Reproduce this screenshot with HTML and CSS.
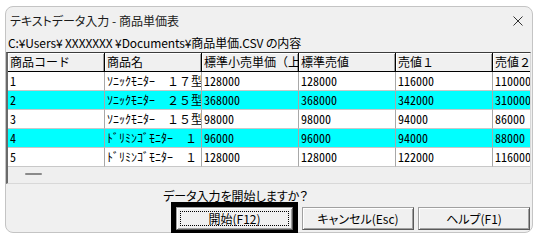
FILE: index.html
```html
<!DOCTYPE html>
<html lang="ja">
<head>
<meta charset="utf-8">
<title>テキストデータ入力 - 商品単価表</title>
<link rel="stylesheet" href="styles.css">
</head>
<body>
<div class="window">
  <div class="titlebar">
    <span class="title">テキストデータ入力 - 商品単価表</span>
    <svg class="close" width="10" height="10" viewBox="0 0 10 10"><path d="M0.5 0.5 L9.5 9.5 M9.5 0.5 L0.5 9.5" stroke="#333" stroke-width="1" fill="none"/></svg>
  </div>
  <div class="path">C:¥Users¥ XXXXXXX ¥Documents¥商品単価.CSV の内容</div>
  <div class="grid">
    <div class="row head">
      <div class="cell">商品コード</div>
      <div class="cell">商品名</div>
      <div class="cell"><span class="clip">標準小売単価（上</span></div>
      <div class="cell">標準売値</div>
      <div class="cell">売値１</div>
      <div class="cell">売値２</div>
    </div>
    <div class="row">
      <div class="cell num">1</div>
      <div class="cell">ｿﾆｯｸﾓﾆﾀｰ　１７型</div>
      <div class="cell num">128000</div>
      <div class="cell num">128000</div>
      <div class="cell num">116000</div>
      <div class="cell num">110000</div>
    </div>
    <div class="row hl">
      <div class="cell num">2</div>
      <div class="cell">ｿﾆｯｸﾓﾆﾀｰ　２５型</div>
      <div class="cell num">368000</div>
      <div class="cell num">368000</div>
      <div class="cell num">342000</div>
      <div class="cell num">310000</div>
    </div>
    <div class="row">
      <div class="cell num">3</div>
      <div class="cell">ｿﾆｯｸﾓﾆﾀｰ　１５型</div>
      <div class="cell num">98000</div>
      <div class="cell num">98000</div>
      <div class="cell num">94000</div>
      <div class="cell num">86000</div>
    </div>
    <div class="row hl">
      <div class="cell num">4</div>
      <div class="cell">ﾄﾞﾘﾐﾝｺﾞﾓﾆﾀｰ　１</div>
      <div class="cell num">96000</div>
      <div class="cell num">96000</div>
      <div class="cell num">94000</div>
      <div class="cell num">88000</div>
    </div>
    <div class="row">
      <div class="cell num">5</div>
      <div class="cell">ﾄﾞﾘﾐﾝｺﾞﾓﾆﾀｰ　１</div>
      <div class="cell num">128000</div>
      <div class="cell num">128000</div>
      <div class="cell num">122000</div>
      <div class="cell num">116000</div>
    </div>
    <div class="thumb"></div>
  </div>
  <div class="message">データ入力を開始しますか？</div>
  <div class="buttons">
    <button class="btn btn-default"><span class="focus">開始(F12)</span></button>
    <button class="btn btn-cancel">キャンセル(Esc)</button>
    <button class="btn btn-help">ヘルプ(F1)</button>
  </div>
</div>
</body>
</html>
```

FILE: styles.css
```css
* { box-sizing: border-box; }
html, body { margin: 0; padding: 0; background: #ffffff; }
body {
  font-family: "Noto Sans CJK JP", sans-serif;
  font-size: 12px;
  color: #000;
}
.window {
  margin: 6px 0 0 5px;
  width: 528px;
  height: 227px;
  border: 1px solid #c4c4c4;
  border-radius: 8px;
  background: #f0f0f0;
  display: flex;
  flex-direction: column;
}
.titlebar {
  height: 27px;
  flex: 0 0 27px;
  display: flex;
  align-items: center;
  padding: 0 9px 0 4px;
}
.title {
  flex: 1;
  line-height: 27px;
  font-feature-settings: "palt";
  color: #1a1a1a;
}
.close { display: block; }
.path {
  height: 18px;
  flex: 0 0 18px;
  line-height: 18px;
  padding-left: 2px;
  font-feature-settings: "palt";
  letter-spacing: -0.1px;
  white-space: nowrap;
}
.grid {
  position: relative;
  height: 132px;
  flex: 0 0 132px;
  margin-right: 1px;
  border-top: 1px solid #3c3c3c;
  border-left: 2px solid #6a6a6a;
  border-right: 1px solid #d8d8d8;
  border-bottom: 1px solid #d8d8d8;
  background: #efefef;
  overflow: hidden;
}
.row {
  display: flex;
  height: 19px;
  background: #fff;
  width: max-content;
}
.row.hl { background: #00ffff; }
.cell {
  flex: 0 0 97px;
  width: 97px;
  height: 19px;
  line-height: 18px;
  padding-left: 2px;
  border-right: 1px solid #a8a8a8;
  border-bottom: 1px solid #c8c8c8;
  white-space: nowrap;
  overflow: hidden;
}
.clip {
  display: block;
  width: 94px;
  overflow: hidden;
  white-space: nowrap;
}
.num { font-feature-settings: "hwid"; }
.row.head { background: #f0f0f0; }
.head .cell {
  border-right: 1px solid #000;
  border-bottom: 1px solid #000;
  box-shadow: inset 1px 1px 0 #fff, inset -1px 0 0 #a0a0a0;
}
.thumb {
  position: absolute;
  left: 17px;
  top: 120px;
  width: 17px;
  height: 2px;
  border-radius: 1px;
  background: #8a8a8a;
}
.message {
  height: 23px;
  flex: 0 0 23px;
  padding: 4px 0 0 157px;
  line-height: 16px;
  font-feature-settings: "palt";
  white-space: nowrap;
}
.buttons {
  display: flex;
  justify-content: flex-end;
  padding-right: 2px;
  height: 23px;
}
.btn {
  height: 23px;
  margin: 0;
  padding: 0;
  font-family: "Noto Sans CJK JP", sans-serif;
  font-size: 12px;
  color: #000;
  background: #f0f0f0;
  border: 1px solid;
  border-color: #a0a0a0 #5a5a5a #5a5a5a #a0a0a0;
  box-shadow: inset 1px 1px 0 #fff, inset -1px -1px 0 #a0a0a0;
  font-feature-settings: "palt";
}
.btn-default {
  width: 117px;
  padding: 3px;
  display: flex;
  outline: 5px solid #000;
  margin-right: 9px;
}
.focus {
  flex: 1;
  display: flex;
  align-items: center;
  justify-content: center;
  border: 1px dotted #000;
}
.btn-cancel { width: 112px; margin-right: 4px; }
.btn-help { width: 112px; }
```
